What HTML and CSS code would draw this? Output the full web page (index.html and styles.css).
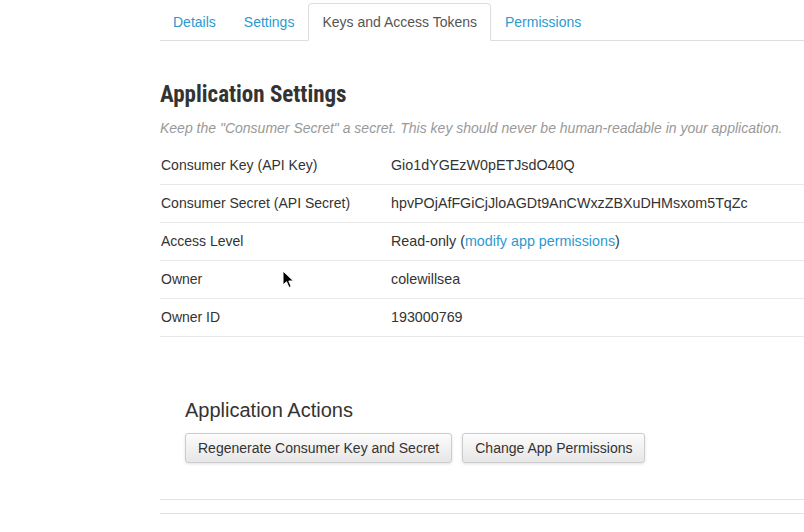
FILE: index.html
```html
<!DOCTYPE html>
<html>
<head>
<meta charset="utf-8">
<link rel="stylesheet" href="styles.css">
</head>
<body>
<div class="page">
  <ul class="tabs">
    <li><a href="#">Details</a></li>
    <li><a href="#">Settings</a></li>
    <li class="active"><a href="#">Keys and Access Tokens</a></li>
    <li><a href="#">Permissions</a></li>
  </ul>

  <h2 class="title">Application Settings</h2>
  <p class="note">Keep the "Consumer Secret" a secret. This key should never be human-readable in your application.</p>

  <div class="rows">
    <div class="row"><span class="label">Consumer Key (API Key)</span><span class="value">Gio1dYGEzW0pETJsdO40Q</span></div>
    <div class="row"><span class="label">Consumer Secret (API Secret)</span><span class="value">hpvPOjAfFGiCjJloAGDt9AnCWxzZBXuDHMsxom5TqZc</span></div>
    <div class="row"><span class="label">Access Level</span><span class="value">Read-only (<a href="#">modify app permissions</a>)</span></div>
    <div class="row"><span class="label">Owner</span><span class="value">colewillsea</span></div>
    <div class="row"><span class="label">Owner ID</span><span class="value">193000769</span></div>
  </div>

  <div class="actions">
    <h3 class="actions-title">Application Actions</h3>
    <div class="buttons">
      <button class="btn">Regenerate Consumer Key and Secret</button>
      <button class="btn">Change App Permissions</button>
    </div>
  </div>

  <div class="footer-lines"></div>
</div>
<svg class="cursor" width="14" height="20" viewBox="0 0 14 20">
  <path d="M1 1 L1 15 L4.5 11.8 L7 17.5 L9.2 16.5 L6.8 11 L11.5 11 Z" fill="#000" stroke="#fff" stroke-width="1"/>
</svg>
</body>
</html>
```

FILE: styles.css
```css
html, body {
  margin: 0;
  padding: 0;
  background: #fff;
}
body {
  font-family: "Liberation Sans", Arial, sans-serif;
  color: #333;
  font-size: 14px;
  width: 804px;
  height: 532px;
  overflow: hidden;
  position: relative;
}
.page {
  margin-left: 160px;
  padding-top: 3px;
}
.tabs {
  list-style: none;
  margin: 0;
  padding: 0;
  display: flex;
  border-bottom: 1px solid #ddd;
}
.tabs li {
  margin-bottom: -1px;
}
.tabs a {
  display: block;
  padding: 8px 13px;
  line-height: 20px;
  font-size: 14px;
  border: 1px solid transparent;
  border-radius: 4px 4px 0 0;
  color: #2b9ad1;
  text-decoration: none;
}
.tabs li:first-child a {
  padding-left: 12px;
}
.tabs li.active a {
  color: #555;
  border-color: #ddd;
  border-bottom-color: #fff;
  background: #fff;
}
.title {
  margin: 40px 0 0 0;
  font-family: "Liberation Sans Narrow", "Roboto Condensed", Roboto, sans-serif;
  font-weight: bold;
  font-size: 23px;
  line-height: 28px;
  color: #333;
}
.note {
  margin: 10px 0 0 0;
  font-style: italic;
  font-size: 14px;
  line-height: 18px;
  color: #999;
}
.rows {
  margin-top: 10px;
}
.row {
  display: flex;
  height: 37px;
  line-height: 37px;
  border-bottom: 1px solid #e8e8e8;
}
.label {
  width: 230px;
  padding-left: 1px;
}
.value {
  font-size: 14.3px;
}
.value a {
  color: #2b9ad1;
  text-decoration: none;
}
.actions {
  padding-left: 25px;
  margin-top: 61px;
}
.actions-title {
  margin: 0;
  font-weight: normal;
  font-size: 20px;
  line-height: 24px;
  color: #333;
}
.buttons {
  display: flex;
  gap: 10px;
  margin-top: 11px;
}
.btn {
  font-family: "Liberation Sans", Arial, sans-serif;
  font-size: 14px;
  color: #333;
  height: 30px;
  padding: 0 12px;
  border: 1px solid #ccc;
  border-radius: 3px;
  background: linear-gradient(#fcfcfc, #e6e6e6);
  box-shadow: 0 1px 3px rgba(0,0,0,0.12);
}
.footer-lines {
  margin-top: 36px;
  height: 13px;
  border-top: 1px solid #e3e3e3;
  border-bottom: 1px solid #e3e3e3;
}
.cursor {
  position: absolute;
  left: 282px;
  top: 270px;
}
```
